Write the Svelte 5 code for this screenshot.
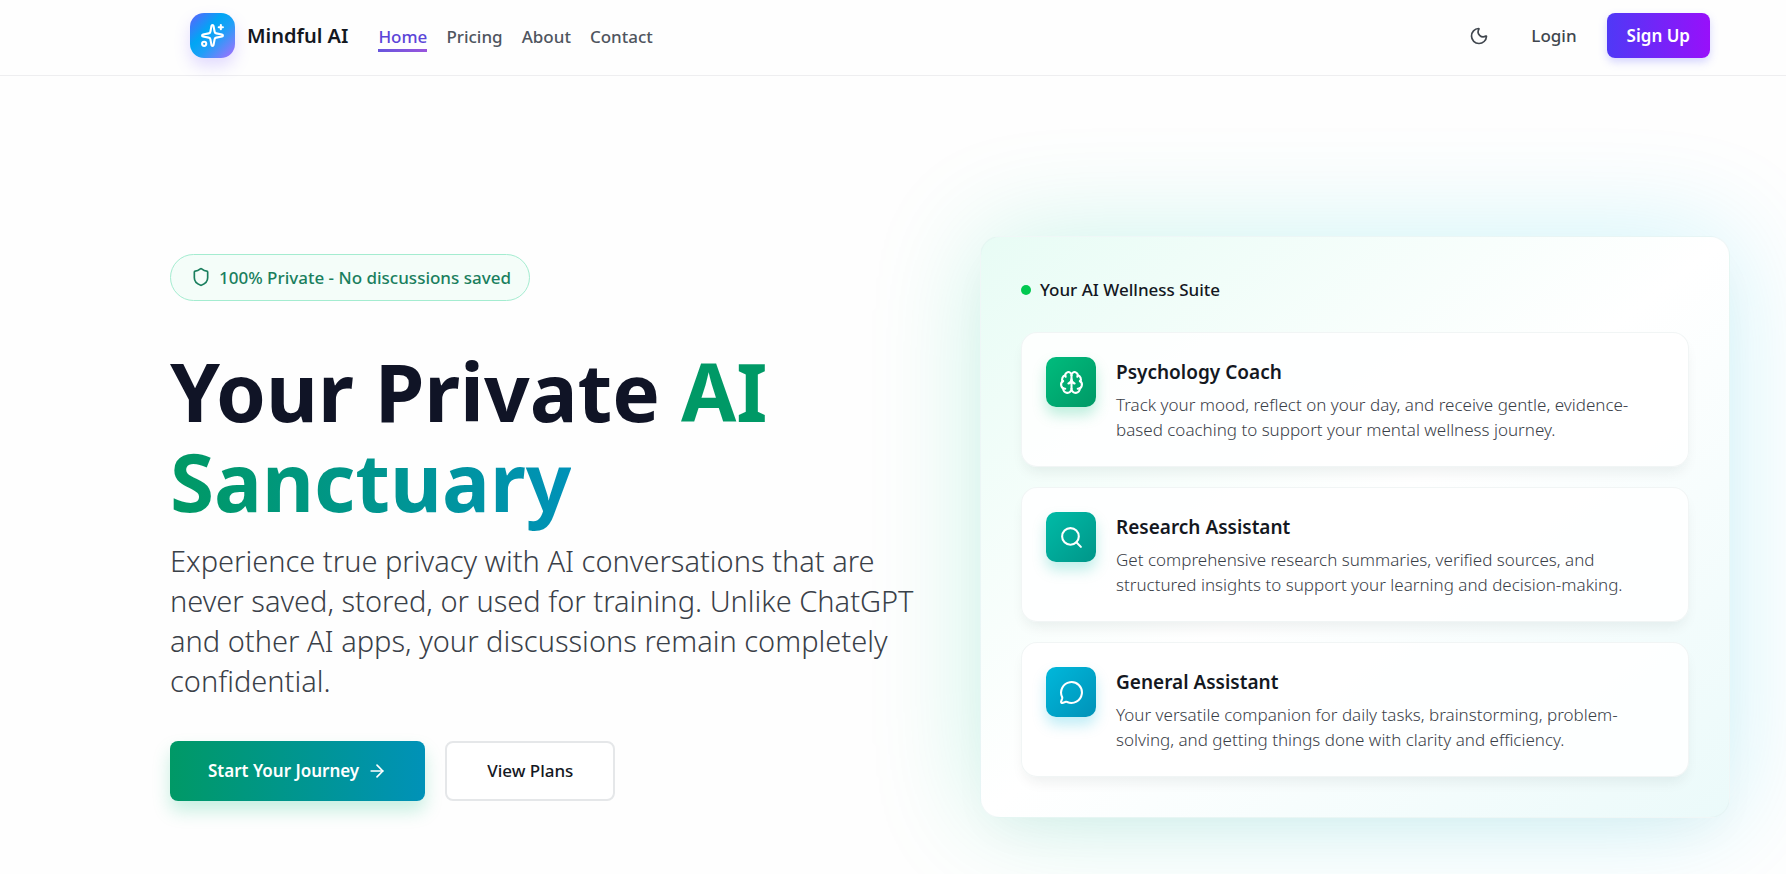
<script>
  const links = [
    { label: 'Home', active: true },
    { label: 'Pricing', active: false },
    { label: 'About', active: false },
    { label: 'Contact', active: false }
  ];

  const assistants = [
    {
      tone: 'emerald',
      title: 'Psychology Coach',
      text: 'Track your mood, reflect on your day, and receive gentle, evidence-based coaching to support your mental wellness journey.',
      paths: [
        'M12 18V5',
        'M15 13a4.17 4.17 0 0 1-3-4 4.17 4.17 0 0 1-3 4',
        'M17.598 6.5A3 3 0 1 0 12 5a3 3 0 1 0-5.598 1.5',
        'M17.997 5.125a4 4 0 0 1 2.526 5.77',
        'M18 18a4 4 0 0 0 2-7.464',
        'M19.967 17.483A4 4 0 1 1 12 18a4 4 0 1 1-7.967-.517',
        'M6 18a4 4 0 0 1-2-7.464',
        'M6.003 5.125a4 4 0 0 0-2.526 5.77'
      ]
    },
    {
      tone: 'teal',
      title: 'Research Assistant',
      text: 'Get comprehensive research summaries, verified sources, and structured insights to support your learning and decision-making.',
      paths: ['m21 21-4.34-4.34', 'M19 11a8 8 0 1 1-16 0 8 8 0 0 1 16 0']
    },
    {
      tone: 'cyan',
      title: 'General Assistant',
      text: 'Your versatile companion for daily tasks, brainstorming, problem-solving, and getting things done with clarity and efficiency.',
      paths: [
        'M2.992 16.342a2 2 0 0 1 .094 1.167l-1.065 3.29a1 1 0 0 0 1.236 1.168l3.413-.998a2 2 0 0 1 1.099.092 10 10 0 1 0-4.777-4.719'
      ]
    }
  ];
</script>

<div class="page">
  <header>
    <div class="bar">
      <a class="brand" href="#top">
        <span class="logo">
          <svg class="icon large" viewBox="0 0 24 24" aria-hidden="true">
            <path d="M11.017 2.814a1 1 0 0 1 1.966 0l1.051 5.558a2 2 0 0 0 1.594 1.594l5.558 1.051a1 1 0 0 1 0 1.966l-5.558 1.051a2 2 0 0 0-1.594 1.594l-1.051 5.558a1 1 0 0 1-1.966 0l-1.051-5.558a2 2 0 0 0-1.594-1.594l-5.558-1.051a1 1 0 0 1 0-1.966l5.558-1.051a2 2 0 0 0 1.594-1.594z" />
            <path d="M20 2v4" />
            <path d="M22 4h-4" />
            <circle cx="4" cy="20" r="2" />
          </svg>
        </span>
        <span class="name">Mindful AI</span>
      </a>
      <nav>
        {#each links as link}
          <a class:active={link.active} href={'#' + link.label.toLowerCase()}>{link.label}</a>
        {/each}
      </nav>
      <div class="actions">
        <button class="theme" type="button" aria-label="Toggle theme">
          <svg class="icon" viewBox="0 0 24 24" aria-hidden="true">
            <path d="M20.985 12.486a9 9 0 1 1-9.473-9.472c.405-.022.617.46.402.803a6 6 0 0 0 8.268 8.268c.344-.215.825-.004.803.401" />
          </svg>
        </button>
        <button class="login" type="button">Login</button>
        <button class="signup" type="button">Sign Up</button>
      </div>
    </div>
  </header>

  <main>
    <div class="hero">
      <section class="intro">
        <div class="badge">
          <svg class="icon" viewBox="0 0 24 24" aria-hidden="true">
            <path d="M20 13c0 5-3.5 7.5-7.66 8.95a1 1 0 0 1-.67-.01C7.5 20.5 4 18 4 13V6a1 1 0 0 1 1-1c2 0 4.5-1.2 6.24-2.72a1.17 1.17 0 0 1 1.52 0C14.51 3.81 17 5 19 5a1 1 0 0 1 1 1z" />
          </svg>
          <span>100% Private - No discussions saved</span>
        </div>
        <h1>Your Private <span>AI Sanctuary</span></h1>
        <p class="lead">
          Experience true privacy with AI conversations that are never saved, stored, or used for
          training. Unlike ChatGPT and other AI apps, your discussions remain completely
          confidential.
        </p>
        <div class="buttons">
          <button class="start" type="button">
            <span>Start Your Journey</span>
            <svg class="icon" viewBox="0 0 24 24" aria-hidden="true">
              <path d="M5 12h14" />
              <path d="m12 5 7 7-7 7" />
            </svg>
          </button>
          <button class="plans" type="button">View Plans</button>
        </div>
      </section>

      <section class="suite">
        <div class="panel">
          <h2><span class="dot"></span>Your AI Wellness Suite</h2>
          <ul>
            {#each assistants as item}
              <li>
                <span class="tile {item.tone}">
                  <svg class="icon large" viewBox="0 0 24 24" aria-hidden="true">
                    {#each item.paths as d}
                      <path {d} />
                    {/each}
                  </svg>
                </span>
                <div>
                  <h3>{item.title}</h3>
                  <p>{item.text}</p>
                </div>
              </li>
            {/each}
          </ul>
        </div>
      </section>
    </div>
  </main>
</div>

<style>
  :global(body) {
    background: #fefefe;
  }

  .page {
    min-height: 100vh;
    box-sizing: border-box;
    display: flex;
    flex-direction: column;
    overflow: hidden;
    font-family: 'Noto Sans', 'Open Sans', sans-serif;
    font-size: 17px;
    line-height: 25px;
    color: #14181f;
  }

  h1,
  h2,
  h3,
  p,
  ul {
    margin: 0;
    padding: 0;
  }

  button {
    font: inherit;
    color: inherit;
    border: 0;
    background: none;
    padding: 0;
    cursor: pointer;
  }

  a {
    color: inherit;
    text-decoration: none;
  }

  .icon {
    width: 20px;
    height: 20px;
    flex: none;
    fill: none;
    stroke: currentColor;
    stroke-width: 2;
    stroke-linecap: round;
    stroke-linejoin: round;
  }

  .icon.large {
    width: 25px;
    height: 25px;
  }

  header {
    border-bottom: 1px solid #eeeef0;
    padding: 0 36px 0 150px;
  }

  .bar {
    display: flex;
    align-items: center;
    max-width: 1600px;
    box-sizing: border-box;
    padding: 13px 40px 17px;
  }

  .brand {
    display: flex;
    align-items: center;
    gap: 12px;
  }

  .logo {
    display: grid;
    place-items: center;
    width: 45px;
    height: 45px;
    border-radius: 14px;
    color: #fff;
    background: linear-gradient(135deg, #615fff, #00a6f4 38%, #1f9ff7 58%, #ad6bff);
    box-shadow: 0 8px 16px rgba(124, 92, 255, 0.22);
  }

  .name {
    font-size: 20px;
    font-weight: 600;
  }

  nav {
    display: flex;
    gap: 19px;
    margin-left: 30px;
    font-weight: 500;
    color: #4f555e;
  }

  nav a {
    padding-top: 5px;
    border-bottom: 3px solid transparent;
  }

  nav a.active {
    color: #5b45d8;
    border-image: linear-gradient(to right, #6655dd, #9a55dd) 1;
  }

  .actions {
    display: flex;
    align-items: center;
    gap: 10px;
    margin-left: auto;
    font-weight: 500;
    color: #40464e;
  }

  .theme {
    display: grid;
    place-items: center;
    width: 45px;
    height: 45px;
  }

  .login,
  .signup {
    height: 45px;
    padding: 0 20px;
  }

  .signup {
    border-radius: 8px;
    color: #fff;
    font-weight: 600;
    background: linear-gradient(to right, #4f39f6, #9810fa);
    box-shadow: 0 4px 8px rgba(97, 95, 255, 0.26);
  }

  main {
    flex: 1;
    padding: 160px 36px 48px 150px;
  }

  .hero {
    display: grid;
    grid-template-columns: 1fr 1fr;
    align-items: center;
    gap: 60px;
    max-width: 1600px;
    box-sizing: border-box;
    padding: 0 20px;
  }

  .badge {
    display: flex;
    width: fit-content;
    align-items: center;
    gap: 8px;
    padding: 10px 18px 10px 20px;
    border: 1px solid #a4ecd0;
    border-radius: 24px;
    background: #f4fdf9;
    color: #1a7f5e;
    font-weight: 500;
  }

  h1 {
    margin: 45px 0 15px;
    font-size: 80px;
    line-height: 90px;
    font-weight: 700;
    color: #101426;
  }

  h1 span {
    color: transparent;
    background: linear-gradient(to right, #009966 20%, #0092b8);
    background-clip: text;
    -webkit-background-clip: text;
  }

  .lead {
    font-size: 29px;
    line-height: 40px;
    font-weight: 300;
    color: #3a4048;
  }

  .buttons {
    display: flex;
    gap: 20px;
    margin-top: 40px;
  }

  .buttons button {
    height: 60px;
    padding: 0 40px;
    border-radius: 8px;
  }

  .buttons .start {
    display: flex;
    align-items: center;
    gap: 8px;
    padding: 0 38px;
    color: #fff;
    font-weight: 600;
    background: linear-gradient(to right, #009966, #0092b8);
    box-shadow: 0 10px 18px rgba(0, 188, 125, 0.22);
  }

  .buttons .plans {
    border: 2px solid #e5e7e9;
    background: #fff;
    font-weight: 500;
  }

  .suite {
    position: relative;
    z-index: 0;
  }

  .suite::before {
    content: '';
    position: absolute;
    z-index: -1;
    inset: 0;
    border-radius: 20px;
    background: linear-gradient(to right, #00cc88, #00ccd4 50%, #10c8f0);
    opacity: 0.2;
    filter: blur(56px);
  }

  .panel {
    padding: 40px;
    border: 1px solid rgba(225, 240, 240, 0.5);
    border-radius: 20px;
    background: linear-gradient(to bottom right, #e8fcf5, #fff 50%, #ebfafa);
    box-shadow: 0 20px 46px -14px rgba(0, 80, 80, 0.06);
  }

  h2 {
    display: flex;
    align-items: center;
    gap: 9px;
    font-size: 17px;
    font-weight: 500;
  }

  .dot {
    width: 10px;
    height: 10px;
    border-radius: 50%;
    background: #00c950;
  }

  ul {
    display: grid;
    gap: 20px;
    margin-top: 30px;
    list-style: none;
  }

  li {
    display: flex;
    gap: 20px;
    padding: 24px;
    border: 1px solid rgba(238, 243, 243, 0.8);
    border-radius: 16px;
    background: rgba(255, 255, 255, 0.85);
    box-shadow: 0 8px 14px -4px rgba(16, 40, 40, 0.08);
  }

  .tile {
    display: grid;
    place-items: center;
    flex: none;
    width: 50px;
    height: 50px;
    border-radius: 10px;
    color: #fff;
  }

  .emerald {
    background: linear-gradient(135deg, #00bc7d, #009966);
    box-shadow: 0 8px 14px rgba(0, 188, 125, 0.25);
  }

  .teal {
    background: linear-gradient(135deg, #00bba7, #009689);
    box-shadow: 0 8px 14px rgba(0, 187, 167, 0.25);
  }

  .cyan {
    background: linear-gradient(135deg, #00b8db, #0092b8);
    box-shadow: 0 8px 14px rgba(0, 184, 219, 0.25);
  }

  h3 {
    font-size: 19px;
    line-height: 30px;
    font-weight: 600;
  }

  li p {
    margin-top: 5px;
    font-weight: 300;
    color: #3a4048;
  }

  @media (max-width: 1100px) {
    header,
    main {
      padding-left: 0;
      padding-right: 0;
    }

    .hero {
      grid-template-columns: 1fr;
    }
  }
</style>
